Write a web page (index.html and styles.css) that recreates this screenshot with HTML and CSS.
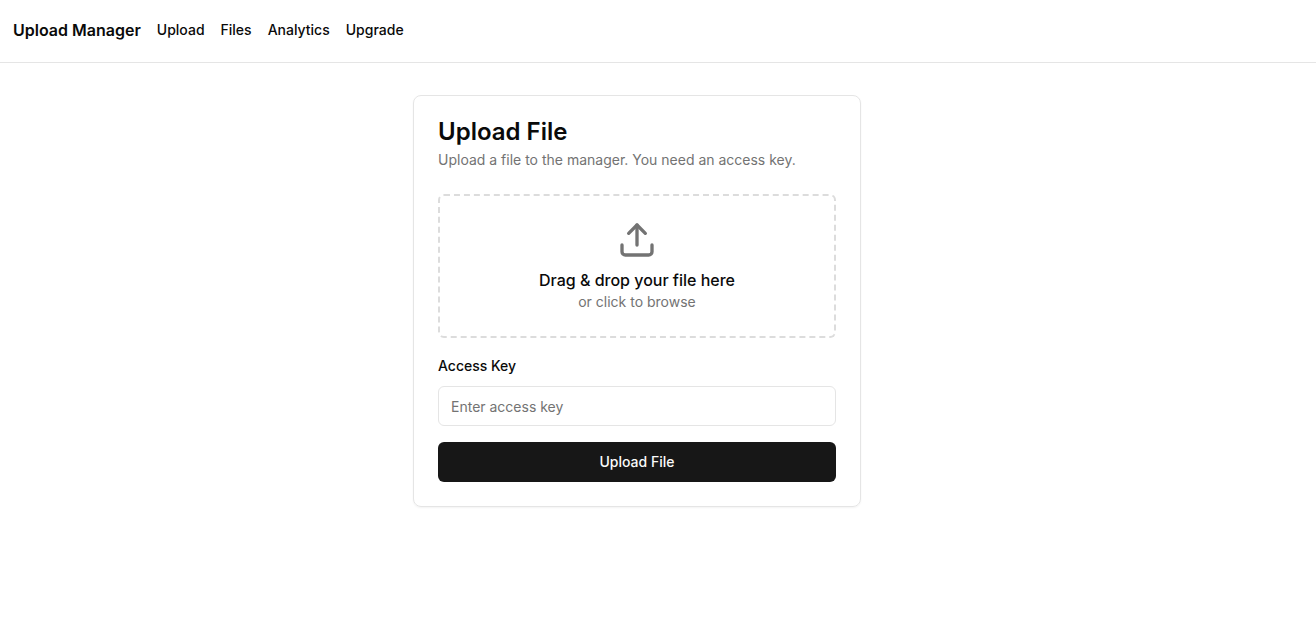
FILE: index.html
```html
<!DOCTYPE html>
<html lang="en">
<head>
<meta charset="utf-8">
<meta name="viewport" content="width=device-width, initial-scale=1">
<title>Upload Manager</title>
<link rel="stylesheet" href="styles.css">
</head>
<body>
<header class="topbar">
  <a class="brand" href="#">Upload Manager</a>
  <nav class="nav">
    <a href="#">Upload</a>
    <a href="#">Files</a>
    <a href="#">Analytics</a>
    <a href="#">Upgrade</a>
  </nav>
</header>
<main class="main">
  <form class="card">
    <div class="card-header">
      <h1 class="title">Upload File</h1>
      <p class="description">Upload a file to the manager. You need an access key.</p>
    </div>
    <button class="dropzone" type="button">
      <svg class="upload-icon" viewBox="0 0 24 24" fill="none" stroke="currentColor" stroke-width="2" stroke-linecap="round" stroke-linejoin="round" aria-hidden="true">
        <path d="M21 15v4a2 2 0 0 1-2 2H5a2 2 0 0 1-2-2v-4"/>
        <path d="M17 8l-5-5-5 5"/>
        <path d="M12 3v12"/>
      </svg>
      <span class="drop-title">Drag &amp; drop your file here</span>
      <span class="drop-hint">or click to browse</span>
    </button>
    <div class="field">
      <label class="label" for="access-key">Access Key</label>
      <input class="input" id="access-key" type="text" placeholder="Enter access key">
    </div>
    <button class="submit" type="submit">Upload File</button>
  </form>
</main>
</body>
</html>
```
FILE: styles.css
```css
* {
  box-sizing: border-box;
}

body {
  margin: 0;
  background: #fff;
  color: #0a0a0a;
  font-family: Inter, "Liberation Sans", sans-serif;
  font-size: 14px;
  line-height: 20px;
}

a {
  color: inherit;
  text-decoration: none;
}

button,
input {
  font: inherit;
}

.topbar {
  display: flex;
  align-items: center;
  gap: 16px;
  padding: 18px 13px 20px;
  border-bottom: 1px solid #e5e5e5;
}

.brand {
  font-size: 16px;
  line-height: 24px;
  font-weight: 600;
}

.nav {
  display: flex;
  gap: 16px;
  font-weight: 500;
}

.main {
  padding: 32px 55px 32px 13px;
}

.card {
  display: flex;
  flex-direction: column;
  gap: 16px;
  max-width: 448px;
  margin: 0 auto;
  padding: 24px;
  border: 1px solid #e5e5e5;
  border-radius: 8px;
  box-shadow: 0 1px 2px rgba(0, 0, 0, 0.05);
}

.card-header {
  display: flex;
  flex-direction: column;
  gap: 6px;
  padding-bottom: 8px;
}

.title {
  margin: 0;
  font-size: 24px;
  line-height: 24px;
  font-weight: 600;
}

.description {
  margin: 0;
  color: #737373;
}

.dropzone {
  display: flex;
  flex-direction: column;
  align-items: center;
  padding: 24px;
  border: 2px dashed #dcdcdc;
  border-radius: 6px;
  background: transparent;
  color: #737373;
  cursor: pointer;
}

.upload-icon {
  width: 40px;
  height: 40px;
  margin-bottom: 8px;
}

.drop-title {
  color: #0a0a0a;
  font-size: 16px;
  line-height: 24px;
  font-weight: 500;
}

.field {
  display: flex;
  flex-direction: column;
  gap: 10px;
  padding-top: 2px;
}

.label {
  font-weight: 500;
}

.input {
  width: 100%;
  height: 40px;
  padding: 8px 12px;
  border: 1px solid #e5e5e5;
  border-radius: 6px;
  background: #fff;
  color: #0a0a0a;
}

.input::placeholder {
  color: #737373;
  opacity: 1;
}

.submit {
  height: 40px;
  border: 0;
  border-radius: 6px;
  background: #171717;
  color: #fafafa;
  font-weight: 500;
  cursor: pointer;
}
```
